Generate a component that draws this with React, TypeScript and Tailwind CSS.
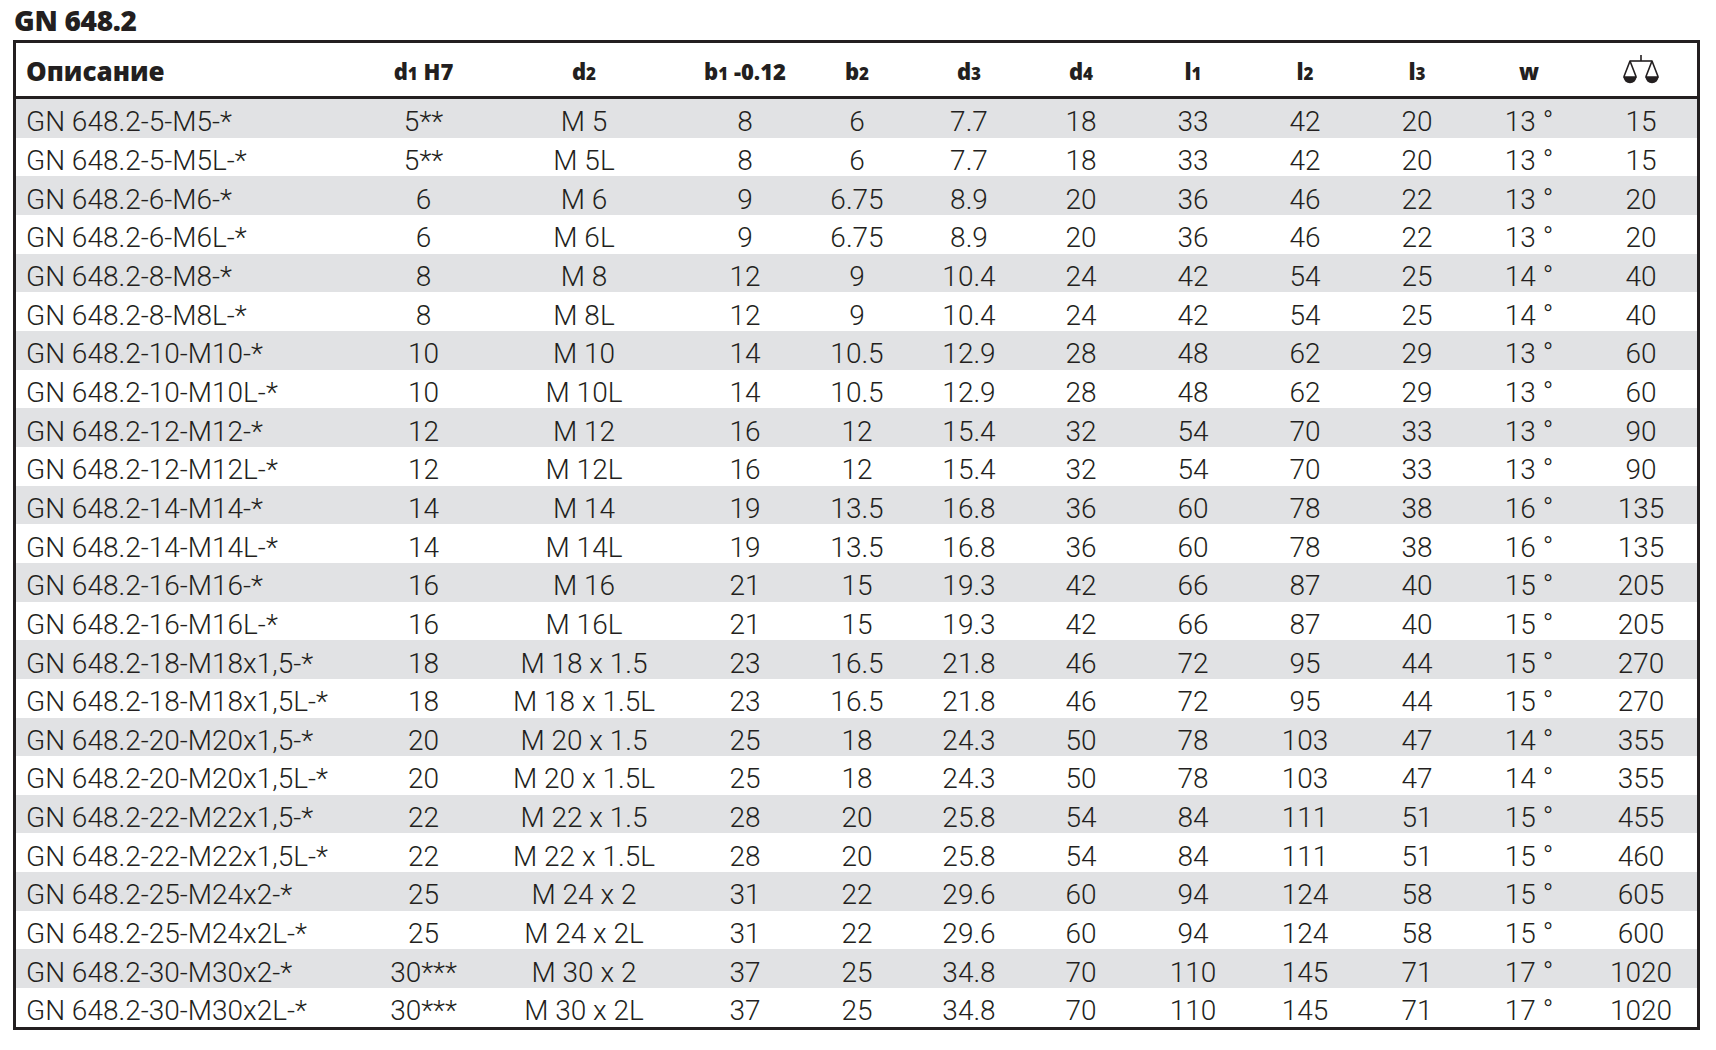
import React from "react";

const rows: string[][] = [
  ["GN 648.2-5-M5-*", "5**", "M 5", "8", "6", "7.7", "18", "33", "42", "20", "13 °", "15"],
  ["GN 648.2-5-M5L-*", "5**", "M 5L", "8", "6", "7.7", "18", "33", "42", "20", "13 °", "15"],
  ["GN 648.2-6-M6-*", "6", "M 6", "9", "6.75", "8.9", "20", "36", "46", "22", "13 °", "20"],
  ["GN 648.2-6-M6L-*", "6", "M 6L", "9", "6.75", "8.9", "20", "36", "46", "22", "13 °", "20"],
  ["GN 648.2-8-M8-*", "8", "M 8", "12", "9", "10.4", "24", "42", "54", "25", "14 °", "40"],
  ["GN 648.2-8-M8L-*", "8", "M 8L", "12", "9", "10.4", "24", "42", "54", "25", "14 °", "40"],
  ["GN 648.2-10-M10-*", "10", "M 10", "14", "10.5", "12.9", "28", "48", "62", "29", "13 °", "60"],
  ["GN 648.2-10-M10L-*", "10", "M 10L", "14", "10.5", "12.9", "28", "48", "62", "29", "13 °", "60"],
  ["GN 648.2-12-M12-*", "12", "M 12", "16", "12", "15.4", "32", "54", "70", "33", "13 °", "90"],
  ["GN 648.2-12-M12L-*", "12", "M 12L", "16", "12", "15.4", "32", "54", "70", "33", "13 °", "90"],
  ["GN 648.2-14-M14-*", "14", "M 14", "19", "13.5", "16.8", "36", "60", "78", "38", "16 °", "135"],
  ["GN 648.2-14-M14L-*", "14", "M 14L", "19", "13.5", "16.8", "36", "60", "78", "38", "16 °", "135"],
  ["GN 648.2-16-M16-*", "16", "M 16", "21", "15", "19.3", "42", "66", "87", "40", "15 °", "205"],
  ["GN 648.2-16-M16L-*", "16", "M 16L", "21", "15", "19.3", "42", "66", "87", "40", "15 °", "205"],
  ["GN 648.2-18-M18x1,5-*", "18", "M 18 x 1.5", "23", "16.5", "21.8", "46", "72", "95", "44", "15 °", "270"],
  ["GN 648.2-18-M18x1,5L-*", "18", "M 18 x 1.5L", "23", "16.5", "21.8", "46", "72", "95", "44", "15 °", "270"],
  ["GN 648.2-20-M20x1,5-*", "20", "M 20 x 1.5", "25", "18", "24.3", "50", "78", "103", "47", "14 °", "355"],
  ["GN 648.2-20-M20x1,5L-*", "20", "M 20 x 1.5L", "25", "18", "24.3", "50", "78", "103", "47", "14 °", "355"],
  ["GN 648.2-22-M22x1,5-*", "22", "M 22 x 1.5", "28", "20", "25.8", "54", "84", "111", "51", "15 °", "455"],
  ["GN 648.2-22-M22x1,5L-*", "22", "M 22 x 1.5L", "28", "20", "25.8", "54", "84", "111", "51", "15 °", "460"],
  ["GN 648.2-25-M24x2-*", "25", "M 24 x 2", "31", "22", "29.6", "60", "94", "124", "58", "15 °", "605"],
  ["GN 648.2-25-M24x2L-*", "25", "M 24 x 2L", "31", "22", "29.6", "60", "94", "124", "58", "15 °", "600"],
  ["GN 648.2-30-M30x2-*", "30***", "M 30 x 2", "37", "25", "34.8", "70", "110", "145", "71", "17 °", "1020"],
  ["GN 648.2-30-M30x2L-*", "30***", "M 30 x 2L", "37", "25", "34.8", "70", "110", "145", "71", "17 °", "1020"],
];

const Sub = ({ c }: { c: string }) => <span className="text-[17px]">{c}</span>;

const ScaleIcon = () => (
  <svg width="38" height="30" viewBox="0 0 38 30" fill="none" stroke="#231f20" strokeWidth="1.6">
    <line x1="19" y1="0" x2="19" y2="6" />
    <line x1="7.5" y1="6" x2="30.5" y2="6" />
    <path d="M8 6 L1.8 22 M8 6 L14.2 22 M1.2 22 H14.8" strokeLinejoin="round" />
    <path d="M30 6 L23.8 22 M30 6 L36.2 22 M23.2 22 H36.8" strokeLinejoin="round" />
    <path d="M1.5 22 A6.5 6.2 0 0 0 14.5 22 Z" fill="#231f20" stroke="none" />
    <path d="M23.5 22 A6.5 6.2 0 0 0 36.5 22 Z" fill="#231f20" stroke="none" />
  </svg>
);

const headers: React.ReactNode[] = [
  <>d<Sub c="1" /> H7</>,
  <>d<Sub c="2" /></>,
  <>b<Sub c="1" /> -0.12</>,
  <>b<Sub c="2" /></>,
  <>d<Sub c="3" /></>,
  <>d<Sub c="4" /></>,
  <>l<Sub c="1" /></>,
  <>l<Sub c="2" /></>,
  <>l<Sub c="3" /></>,
  <>w</>,
];

export default function App() {
  return (
    <div className="w-[1716px] h-[1050px] bg-white text-[#231f20] pl-[13px]" style={{ fontFamily: "Roboto, 'Liberation Sans', sans-serif" }}>
      <div
        className="h-[40px] pt-[3px] pl-[1px] text-[28px] leading-[34px] font-extrabold tracking-[-0.3px]"
        style={{ fontFamily: "'Open Sans', Roboto, sans-serif" }}
      >
        GN 648.2
      </div>
      <div className="w-[1687px] border-[3px] border-[#231f20]">
        <div
          className="grid grid-cols-[352px_111px_210px_repeat(9,112px)] h-[56px] items-center border-b-[3px] border-[#231f20] font-extrabold text-[22px] pt-[4px]"
          style={{ fontFamily: "'Open Sans', Roboto, sans-serif" }}
        >
          <div className="pl-[10px] text-[26px]">Описание</div>
          {headers.map((h, i) => (
            <div key={i} className="text-center">
              {h}
            </div>
          ))}
          <div className="flex justify-center -mt-[4px]">
            <ScaleIcon />
          </div>
        </div>
        {rows.map((r, i) => (
          <div
            key={i}
            className={`grid grid-cols-[352px_111px_210px_repeat(9,112px)] h-[38.667px] items-center text-[28px] font-light leading-none pt-[8px] ${
              i % 2 === 0 ? "bg-[#e1e2e4]" : "bg-white"
            }`}
          >
            {r.map((c, j) => (
              <div key={j} className={j === 0 ? "pl-[10px] whitespace-nowrap" : "text-center whitespace-nowrap"}>
                {c}
              </div>
            ))}
          </div>
        ))}
      </div>
    </div>
  );
}
